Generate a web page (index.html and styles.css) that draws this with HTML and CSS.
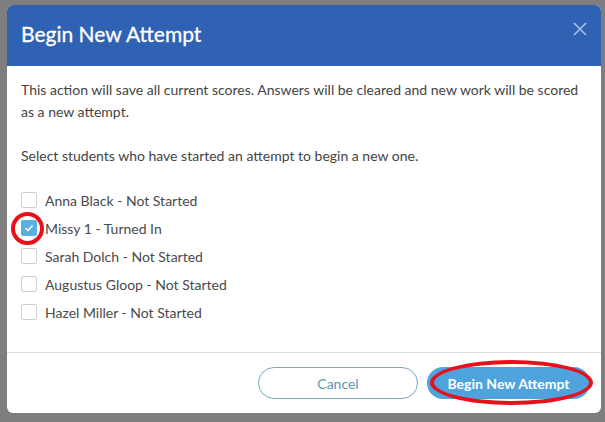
FILE: index.html
```html
<!DOCTYPE html>
<html>
<head>
<meta charset="utf-8">
<link rel="stylesheet" href="styles.css">
</head>
<body>
<div class="backdrop">
  <div class="modal">
    <div class="modal-header">
      <h1 class="modal-title">Begin New Attempt</h1>
      <button class="close" aria-label="Close">
        <svg width="14" height="14" viewBox="0 0 14 14"><path d="M1 1L13 13M13 1L1 13" stroke="#a8c0e8" stroke-width="1.6" fill="none"/></svg>
      </button>
    </div>
    <div class="modal-body">
      <p class="intro">This action will save all current scores. Answers will be cleared and new work will be scored as a new attempt.</p>
      <p class="select">Select students who have started an attempt to begin a new one.</p>
      <ul class="students">
        <li class="student"><span class="box"></span>Anna Black - Not Started</li>
        <li class="student"><span class="box checked"><svg width="10" height="8" viewBox="0 0 10 8"><path d="M1.5 4.2L4 6.5L8.5 1.5" stroke="#fff" stroke-width="1.5" fill="none"/></svg></span>Missy 1 - Turned In<span class="ring"></span></li>
        <li class="student"><span class="box"></span>Sarah Dolch - Not Started</li>
        <li class="student"><span class="box"></span>Augustus Gloop - Not Started</li>
        <li class="student"><span class="box"></span>Hazel Miller - Not Started</li>
      </ul>
    </div>
    <div class="modal-footer">
      <button class="btn btn-cancel">Cancel</button>
      <button class="btn btn-primary">Begin New Attempt<span class="ellipse"></span></button>
    </div>
  </div>
</div>
</body>
</html>
```
FILE: styles.css
```css
html, body {
  margin: 0;
  padding: 0;
}
body {
  font-family: Lato, "Liberation Sans", sans-serif;
  background: #7e7e7e;
  width: 605px;
  height: 422px;
  overflow: hidden;
}
.backdrop {
  padding: 5px 4px 0 7px;
}
.modal {
  width: 594px;
  height: 408px;
  background: #fff;
  border-radius: 6px;
  display: flex;
  flex-direction: column;
}
.modal-header {
  height: 61px;
  background: #2f62b2;
  border-radius: 6px 6px 0 0;
  display: flex;
  align-items: center;
  justify-content: space-between;
  padding: 0 14px 4px 14px;
  box-sizing: border-box;
}
.modal-title {
  margin: 0;
  color: #fff;
  font-size: 21px;
  font-weight: 400;
  -webkit-text-stroke: 0.3px #fff;
}
.close {
  background: none;
  border: 0;
  padding: 0;
  margin-top: -9px;
  width: 14px;
  height: 14px;
  display: flex;
}
.modal-body {
  padding: 13px 14px 0 14px;
  color: #444;
  font-size: 14px;
  flex: 1;
  border-bottom: 1px solid #dcdcdc;
}
.intro {
  margin: 0;
  line-height: 22px;
}
.select {
  margin: 22px 0 0;
  line-height: 22px;
}
.students {
  list-style: none;
  margin: 19px 0 0;
  padding: 0;
}
.student {
  position: relative;
  height: 28px;
  display: flex;
  align-items: center;
  color: #4a4a4a;
}
.box {
  width: 14px;
  height: 14px;
  border: 1px solid #cfcfcf;
  border-radius: 2px;
  margin-right: 8px;
  display: flex;
  align-items: center;
  justify-content: center;
}
.box.checked {
  background: #5aafe3;
  border-color: #5aafe3;
}
.ring {
  position: absolute;
  left: -10px;
  top: -2px;
  width: 25px;
  height: 25px;
  border: 4.5px solid #e8101a;
  border-radius: 50%;
}
.modal-footer {
  height: 60px;
  display: flex;
  align-items: center;
  justify-content: flex-end;
  gap: 9px;
  padding: 0 11px 0 0;
}
.btn {
  height: 32px;
  border-radius: 16px;
  font-family: Lato, "Liberation Sans", sans-serif;
  font-size: 14px;
  padding: 0;
  position: relative;
}
.btn-cancel {
  width: 160px;
  background: #fff;
  border: 1px solid #7aaac0;
  color: #5d93b5;
}
.btn-primary {
  width: 163px;
  background: #4ea3dc;
  border: 0;
  color: #fff;
  font-weight: 700;
}
.ellipse {
  position: absolute;
  left: 3px;
  top: -7px;
  width: 155px;
  height: 37px;
  border: 4.5px solid #e8101a;
  border-radius: 50%;
}
```
